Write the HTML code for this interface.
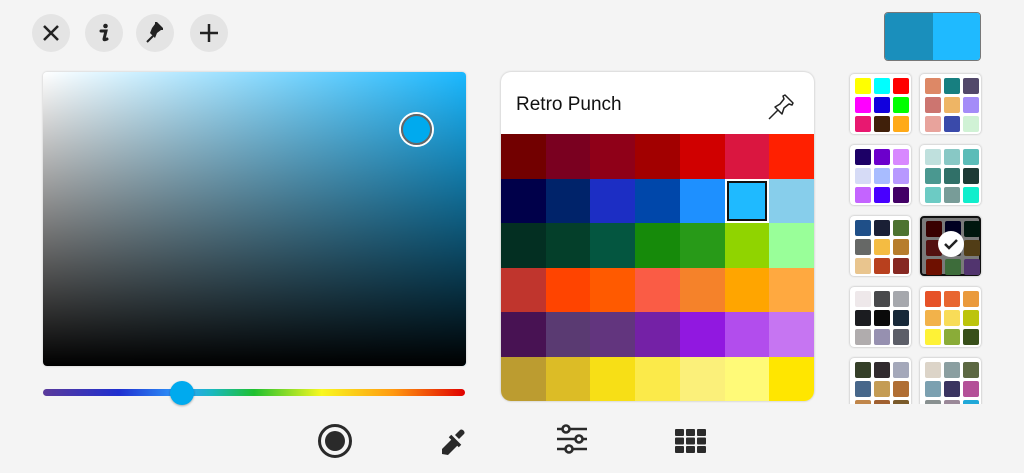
<!DOCTYPE html>
<html><head><meta charset="utf-8"><style>
*{margin:0;padding:0;box-sizing:border-box}
body{width:1024px;height:473px;background:#f4f4f4;position:relative;overflow:hidden;font-family:"Liberation Sans",sans-serif}
.cb{position:absolute;top:14px;width:38px;height:38px;border-radius:50%;background:#e4e4e4}
.cb svg{position:absolute;left:0;top:0}
#sq{position:absolute;left:43px;top:72px;width:423px;height:294px;border-radius:4px;overflow:hidden;background:linear-gradient(to right,#fff,#1ab8ff);box-shadow:0 0 2px rgba(0,0,0,.2)}
#sq:after{content:"";position:absolute;inset:0;background:linear-gradient(to bottom,rgba(0,0,0,0),#000)}
#card{position:absolute;left:501px;top:72px;width:313px;height:329px;border-radius:10px;overflow:hidden;background:#fff;box-shadow:0 0 2px rgba(0,0,0,.25)}
#card h1{position:absolute;left:15px;top:22px;font-size:19px;font-weight:normal;color:#111}
#grid{position:absolute;left:0;top:62px;width:313px;height:267px;display:grid;grid-template-columns:repeat(7,1fr);grid-template-rows:repeat(6,1fr)}
.t{position:absolute;width:61px;height:60px;background:#fff;border-radius:4px;box-shadow:0 0 2px rgba(0,0,0,.3);display:grid;grid-template-columns:repeat(3,16px);grid-template-rows:repeat(3,16px);gap:3px;padding:4px 5px}
.t i{border-radius:2px}
</style></head><body>
<div class="cb" style="left:32px"><svg width="38" height="38"><path d="M12 12L26 26M26 12L12 26" stroke="#222" stroke-width="2.5"/></svg></div>
<div class="cb" style="left:85px"><svg width="38" height="38"><circle cx="20.5" cy="12" r="2.3" fill="#222"/><path d="M16 17h5l-2 8c0 1 1 1 3 0" stroke="#222" stroke-width="3" fill="none" stroke-linecap="round"/></svg></div>
<div class="cb" style="left:136px"><svg width="38" height="38"><path d="M11 28l6-6" stroke="#222" stroke-width="2"/><path d="M14 19l5 5 2-5 4-3 2 0 0-2-6-6-2 0 0 2-3 4z" fill="#222"/></svg></div>
<div class="cb" style="left:190px"><svg width="38" height="38"><path d="M19 10v18M10 19h18" stroke="#222" stroke-width="2.5"/></svg></div>
<div style="position:absolute;left:884px;top:12px;width:97px;height:49px;border-radius:4px;overflow:hidden;border:1px solid #777;display:flex"><div style="width:48px;background:#1a8fbc"></div><div style="flex:1;background:#1fbaff"></div></div>
<div id="sq"></div>
<div style="position:absolute;left:399px;top:112px;width:35px;height:35px;border-radius:50%;border:2px solid #fff;z-index:2"><div style="width:31px;height:31px;border-radius:50%;border:2px solid #666;background:#00aaee"></div></div>
<div style="position:absolute;left:43px;top:389px;width:422px;height:7px;border-radius:4px;background:linear-gradient(to right,#5a3a9a,#1f2fd0 18%,#2fa0ff 33%,#1ab8c0 40%,#1fc030 50%,#f8f820 66%,#ff9910 83%,#e00000)"></div>
<div style="position:absolute;left:170px;top:381px;width:24px;height:24px;border-radius:50%;background:#00aaee;box-shadow:0 1px 2px rgba(0,0,0,.3)"></div>
<div id="card"><h1>Retro Punch</h1>
<svg style="position:absolute;left:266px;top:20px" width="30" height="30"><path d="M2 27l9-9" stroke="#222" stroke-width="1.5"/><path d="M8 15l7 7 2-6 5-4 3 1 1-2-8-8-2 1 1 3-4 5z" fill="none" stroke="#222" stroke-width="1.5" stroke-linejoin="round"/></svg>
<div id="grid">
<i style="background:#720000"></i><i style="background:#7a0020"></i><i style="background:#8f0018"></i><i style="background:#a20000"></i><i style="background:#d00000"></i><i style="background:#da1640"></i><i style="background:#ff2000"></i>
<i style="background:#00004a"></i><i style="background:#00236a"></i><i style="background:#1c2ec4"></i><i style="background:#0047aa"></i><i style="background:#1e90ff"></i><i style="background:#1fbaff;border:2px solid #fff;outline:2px solid #111;outline-offset:-4px"></i><i style="background:#87ceeb"></i>
<i style="background:#032f22"></i><i style="background:#043f2a"></i><i style="background:#045640"></i><i style="background:#168a0a"></i><i style="background:#289a18"></i><i style="background:#90d400"></i><i style="background:#99ff99"></i>
<i style="background:#c0352d"></i><i style="background:#ff4400"></i><i style="background:#ff5a00"></i><i style="background:#fa5c45"></i><i style="background:#f5822a"></i><i style="background:#ffa500"></i><i style="background:#ffa940"></i>
<i style="background:#481253"></i><i style="background:#5a3a72"></i><i style="background:#62357e"></i><i style="background:#7421a6"></i><i style="background:#9118e0"></i><i style="background:#b24ded"></i><i style="background:#c675f2"></i>
<i style="background:#bc9c30"></i><i style="background:#dcbc26"></i><i style="background:#f7df16"></i><i style="background:#fbea4a"></i><i style="background:#fbf07a"></i><i style="background:#fffa78"></i><i style="background:#ffe600"></i>
</div></div>
<div class="t" style="left:850px;top:74px"><i style="background:#ff0"></i><i style="background:#0ff"></i><i style="background:#f00"></i><i style="background:#f0f"></i><i style="background:#10d"></i><i style="background:#0f0"></i><i style="background:#e81870"></i><i style="background:#40200a"></i><i style="background:#ffaa18"></i></div>
<div class="t" style="left:920px;top:74px"><i style="background:#dd8866"></i><i style="background:#177f80"></i><i style="background:#52486a"></i><i style="background:#cc7570"></i><i style="background:#eeb565"></i><i style="background:#a48cf8"></i><i style="background:#e8a39c"></i><i style="background:#3a4aaa"></i><i style="background:#d0f2d5"></i></div>
<div class="t" style="left:850px;top:145px"><i style="background:#1c0066"></i><i style="background:#6c00cc"></i><i style="background:#d888ff"></i><i style="background:#d6dbf6"></i><i style="background:#a8bcff"></i><i style="background:#b898ff"></i><i style="background:#c464ff"></i><i style="background:#4800ff"></i><i style="background:#420066"></i></div>
<div class="t" style="left:920px;top:145px"><i style="background:#bfe0dd"></i><i style="background:#88c8c5"></i><i style="background:#5bbcb8"></i><i style="background:#4a9890"></i><i style="background:#307068"></i><i style="background:#1d3a35"></i><i style="background:#6ccbc4"></i><i style="background:#789c98"></i><i style="background:#10eecc"></i></div>
<div class="t" style="left:850px;top:216px"><i style="background:#1f4f88"></i><i style="background:#1a1f35"></i><i style="background:#4d7330"></i><i style="background:#666866"></i><i style="background:#f4bc42"></i><i style="background:#b77d2d"></i><i style="background:#e9c58e"></i><i style="background:#b8401e"></i><i style="background:#862822"></i></div>
<div class="t" style="left:920px;top:216px;border:2px solid #111;padding:3px 4px;background:#888;filter:brightness(.9)"><i style="background:#3e0000"></i><i style="background:#000025"></i><i style="background:#001a10"></i><i style="background:#5c1212"></i><i style="background:#333"></i><i style="background:#5a4418"></i><i style="background:#7a1200"></i><i style="background:#447840"></i><i style="background:#5a3a7a"></i></div>
<svg style="position:absolute;left:937px;top:230px" width="28" height="28"><circle cx="14" cy="14" r="13" fill="#fff"/><path d="M8 14l4 4 8-8" stroke="#222" stroke-width="2.5" fill="none"/></svg>
<div class="t" style="left:850px;top:287px"><i style="background:#eee8ea"></i><i style="background:#48494b"></i><i style="background:#a6a8ad"></i><i style="background:#1b1c20"></i><i style="background:#0a0a0a"></i><i style="background:#172838"></i><i style="background:#b0acad"></i><i style="background:#9690b0"></i><i style="background:#5c5e68"></i></div>
<div class="t" style="left:920px;top:287px"><i style="background:#e65228"></i><i style="background:#e86630"></i><i style="background:#ea9a3c"></i><i style="background:#f2b24a"></i><i style="background:#f8dc58"></i><i style="background:#bcc40c"></i><i style="background:#fef236"></i><i style="background:#8aac38"></i><i style="background:#38501a"></i></div>
<div style="position:absolute;left:845px;top:352px;width:145px;height:52px;overflow:hidden">
<div class="t" style="left:5px;top:6px"><i style="background:#353f28"></i><i style="background:#302a2e"></i><i style="background:#a4a8ba"></i><i style="background:#47678a"></i><i style="background:#c49c54"></i><i style="background:#b06e34"></i><i style="background:#c0864a"></i><i style="background:#a06030"></i><i style="background:#7a5a2a"></i></div>
<div class="t" style="left:75px;top:6px"><i style="background:#dcd4c8"></i><i style="background:#8a9ea0"></i><i style="background:#5c6842"></i><i style="background:#7ba0b0"></i><i style="background:#3a3460"></i><i style="background:#b45098"></i><i style="background:#889090"></i><i style="background:#9a8898"></i><i style="background:#20a8d8"></i></div>
</div>
<svg style="position:absolute;left:316px;top:422px" width="38" height="38"><circle cx="19" cy="19" r="15.5" fill="none" stroke="#2a2a2a" stroke-width="3"/><circle cx="19" cy="19" r="10" fill="#2a2a2a"/></svg>
<svg style="position:absolute;left:438px;top:425px" width="32" height="32"><path d="M4 29l0-5 10-10 6 6-10 10z" fill="#2a2a2a"/><path d="M12 11l10 10" stroke="#2a2a2a" stroke-width="3.5"/><path d="M17 10l5-5c2-2 6 2 4 4l-5 5z" fill="#2a2a2a"/></svg>
<svg style="position:absolute;left:554px;top:424px" width="36" height="34"><g stroke="#2a2a2a" stroke-width="2.6" fill="#f4f4f4"><path d="M3 5h30M3 15h30M3 25h30"/><circle cx="12" cy="5" r="3.5"/><circle cx="25" cy="15" r="3.5"/><circle cx="15" cy="25" r="3.5"/></g></svg>
<svg style="position:absolute;left:675px;top:429px" width="32" height="24"><g fill="#2a2a2a"><rect x="0" y="0" width="9" height="7" rx="1"/><rect x="11" y="0" width="9" height="7" rx="1"/><rect x="22" y="0" width="9" height="7" rx="1"/><rect x="0" y="8.5" width="9" height="7" rx="1"/><rect x="11" y="8.5" width="9" height="7" rx="1"/><rect x="22" y="8.5" width="9" height="7" rx="1"/><rect x="0" y="17" width="9" height="7" rx="1"/><rect x="11" y="17" width="9" height="7" rx="1"/><rect x="22" y="17" width="9" height="7" rx="1"/></g></svg>
</body></html>
